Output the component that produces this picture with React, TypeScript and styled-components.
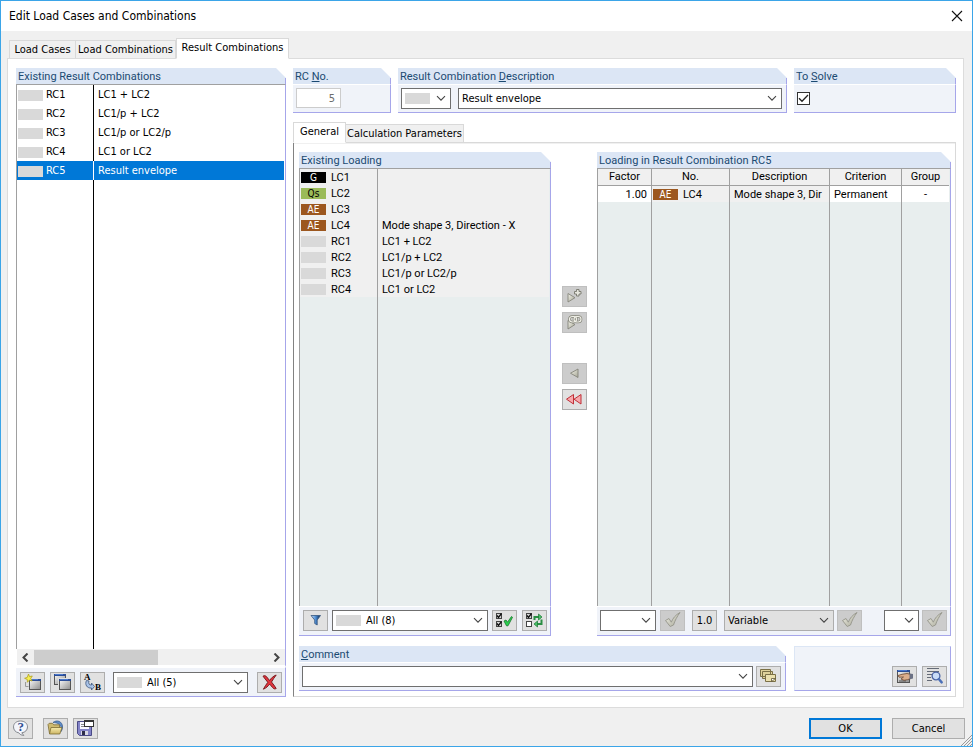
import React from "react";
import styled, { createGlobalStyle, css } from "styled-components";

const UI = `"DejaVu Sans Condensed", "DejaVu Sans", sans-serif`;
const SANS = `Roboto, "Liberation Sans", Arial, sans-serif`;
const LILAC = "#a6a6ea";
const HEAD = "#dce6f5";
const PANEL = "#f0f3f9";
const GRID = "#a0a0a0";

const Global = createGlobalStyle`
  *, *::before, *::after { box-sizing: border-box; }
  body { margin: 0; background: #f0f0f0; font-family: ${UI}; font-size: 11px; color: #000; }
  button, select, input { font: inherit; color: inherit; margin: 0; border-radius: 0; }
  svg { display: block; flex: none; }
`;

const Window = styled.div`
  min-height: 100vh;
  display: flex;
  flex-direction: column;
  border: 1px solid #3ba5e8;
  background: #f0f0f0;
`;

const TitleBar = styled.header`
  height: 30px;
  flex: none;
  display: flex;
  align-items: center;
  justify-content: space-between;
  padding: 0 7px 0 8px;
  background: #fff;
`;

const Title = styled.h1`
  margin: 0;
  font: 400 12px/16px ${UI};
`;

const CloseButton = styled.button`
  border: 0;
  padding: 0;
  background: none;
`;

const Main = styled.main`
  flex: 1;
  display: flex;
  flex-direction: column;
  padding: 7px 8px 0 6px;
`;

const TabStrip = styled.div<{ $indent?: number }>`
  display: flex;
  align-items: flex-end;
  height: 21px;
  flex: none;
  padding-left: ${(p) => p.$indent ?? 0}px;
  margin-bottom: -1px;
`;

const Tab = styled.button<{ $active?: boolean; $width: number }>`
  width: ${(p) => p.$width}px;
  height: 19px;
  padding: 1px 0 0;
  border: 1px solid #d9d9d9;
  border-left-width: 0;
  background: #f0f0f0;
  line-height: 16px;
  white-space: nowrap;
  &:first-child { border-left-width: 1px; }
  ${(p) =>
    p.$active &&
    css`
      height: 21px;
      padding: 0 0 1px;
      background: #fff;
      border-bottom-color: #fff;
      border-left-width: 1px;
      position: relative;
    `}
`;

const Page = styled.div`
  flex: 1;
  display: grid;
  grid-template-columns: 270px minmax(0, 1fr);
  column-gap: 7px;
  padding: 9px 7px 10px 8px;
  background: #fff;
  border: 1px solid #dcdcdc;
`;

const Group = styled.section`
  display: flex;
  flex-direction: column;
  min-width: 0;
`;

const GroupTitle = styled.h2`
  height: 16px;
  flex: none;
  margin: 0;
  padding-left: 2px;
  font: 400 11px/18px ${SANS};
  color: #1b4a72;
  white-space: nowrap;
  background: linear-gradient(${LILAC}, ${LILAC}) right 10px / 1px 100% no-repeat, ${HEAD};
  clip-path: polygon(0 0, calc(100% - 10px) 0, 100% 10px, 100% 100%, 0 100%);
  u { text-underline-offset: 1px; }
`;

const GroupBody = styled.div`
  display: flex;
  align-items: flex-start;
  height: 29px;
  padding: 3px 4px 0 3px;
  gap: 7px;
  background: ${PANEL};
  border-top: 1px solid #fff;
  border-right: 1px solid ${LILAC};
  border-bottom: 1px solid ${LILAC};
`;

const ListArea = styled.div<{ $fill: string }>`
  flex: 1;
  display: flex;
  border-top: 1px solid ${GRID};
  border-left: 1px solid ${GRID};
  border-right: 1px solid ${LILAC};
  padding-right: 1px;
  background: ${(p) => p.$fill};
`;

const DataTable = styled.table<{ $line: string; $row: number; $font: string }>`
  width: 100%;
  table-layout: fixed;
  border-collapse: separate;
  border-spacing: 0;
  font: 400 11px / ${(p) => p.$row - 1}px ${(p) => p.$font};
  td, th {
    padding: 0 4px;
    text-align: left;
    vertical-align: top;
    font-weight: 400;
    white-space: nowrap;
    overflow: hidden;
  }
  td { padding-top: 1px; }
  td:not(:last-child), th:not(:last-child) { border-right: 1px solid ${(p) => p.$line}; }
  th { height: 17px; text-align: center; background: #f0f0f0; border-bottom: 1px solid ${GRID}; }
  tbody tr { height: ${(p) => p.$row}px; }
`;

const Row = styled.tr<{ $bg: string; $selected?: boolean }>`
  background: ${(p) => p.$bg};
  ${(p) =>
    p.$selected &&
    css`
      color: #fff;
      && td { border-color: #fff; }
    `}
`;

const FillRow = styled.tr`
  tbody && { height: auto; }
`;

const Cell = styled.td<{ $align?: string; $bg?: string; $tight?: boolean }>`
  && {
    text-align: ${(p) => p.$align ?? "left"};
    ${(p) => p.$bg && `background: ${p.$bg};`}
    ${(p) => p.$tight && "padding-left: 1px;"}
  }
`;

const CaseName = styled.span<{ $gap: number }>`
  display: flex;
  align-items: center;
  gap: ${(p) => p.$gap}px;
`;

const Badge = styled.span<{ $bg?: string; $fg?: string }>`
  width: 25px;
  height: 11px;
  flex: none;
  background: ${(p) => p.$bg ?? "#d9d9d9"};
  color: ${(p) => p.$fg ?? "#fff"};
  font: 400 10px/11px ${UI};
  text-align: center;
`;

const Toolbar = styled.div`
  display: flex;
  align-items: flex-start;
  gap: 7px;
  height: 30px;
  flex: none;
  padding: 3px 3px 0 3px;
  background: ${PANEL};
  border-top: 1px solid #fff;
  border-right: 1px solid ${LILAC};
  border-bottom: 1px solid ${LILAC};
`;

const LoadingTools = styled(Toolbar)`
  gap: 4px;
  padding-left: 4px;
`;

const ResultTools = styled(Toolbar)`
  gap: 8px;
  padding: 4px 3px 0 4px;
`;

const Cluster = styled.div<{ $gap: number; $end?: boolean }>`
  display: flex;
  gap: ${(p) => p.$gap}px;
  ${(p) => p.$end && "margin-left: auto;"}
`;

const ToolButton = styled.button`
  width: 25px;
  height: 21px;
  flex: none;
  display: flex;
  align-items: center;
  justify-content: center;
  padding: 0;
  border: 1px solid #adadad;
  background: #e1e1e1;
  &:disabled { background: #cccccc; border-color: #bfbfbf; }
`;

const ComboFrame = styled.div<{ $width?: number; $muted?: boolean }>`
  position: relative;
  ${(p) => (p.$width ? `width: ${p.$width}px; flex: none;` : "flex: 1; min-width: 0;")}
  height: 21px;
  display: flex;
  align-items: center;
  padding-left: 3px;
  gap: 5px;
  border: 1px solid ${(p) => (p.$muted ? "#adadad" : "#6f6f6f")};
  background: ${(p) => (p.$muted ? "#e1e1e1" : "#fff")};
  > svg { position: absolute; right: 4px; top: 6px; pointer-events: none; }
`;

const ComboSelect = styled.select`
  appearance: none;
  flex: 1;
  min-width: 0;
  height: 19px;
  padding: 0;
  border: 0;
  outline: 0;
  background: none;
`;

const NumberInput = styled.input`
  width: 45px;
  height: 20px;
  border: 1px solid #cccccc;
  padding: 0 5px;
  background: #fff;
  color: #6d6d6d;
  text-align: right;
`;

const CheckFrame = styled.span`
  position: relative;
  display: block;
  width: 13px;
  height: 13px;
  margin-top: 4px;
  svg { position: absolute; left: 1px; top: 1px; pointer-events: none; opacity: 0; }
  input:checked + svg { opacity: 1; }
`;

const CheckBox = styled.input`
  appearance: none;
  display: block;
  width: 13px;
  height: 13px;
  border: 1px solid #333;
  background: #fff;
`;

const TopGroups = styled.div`
  display: grid;
  grid-template-columns: 98px minmax(0, 1fr) 162px;
  column-gap: 7px;
  margin-bottom: 9px;
`;

const InnerPage = styled.div`
  flex: 1;
  display: flex;
  flex-direction: column;
  gap: 10px;
  padding: 9px 4px 5px 5px;
  border: 1px solid #d9d9d9;
  border-left-color: #828282;
  box-shadow: inset 0 1px 0 #f0f0f0;
`;

const Panels = styled.div`
  flex: 1;
  display: grid;
  grid-template-columns: minmax(0, 252fr) 46px minmax(0, 354fr);
`;

const Transfer = styled.div`
  display: flex;
  flex-direction: column;
  align-items: center;
  gap: 30px;
  padding: 134px 0 0 1px;
`;

const ButtonStack = styled.div`
  display: grid;
  gap: 5px;
`;

const BottomRow = styled.div`
  display: grid;
  grid-template-columns: minmax(0, 1fr) 157px;
  column-gap: 8px;
`;

const CommentBody = styled(GroupBody)`
  gap: 3px;
`;

const ActionPanel = styled.div`
  display: flex;
  align-items: flex-end;
  justify-content: flex-end;
  gap: 5px;
  padding: 0 3px 3px;
  background: ${PANEL};
  border: 1px solid ${HEAD};
  border-right-color: ${LILAC};
  border-bottom-color: ${LILAC};
`;

const ScrollBar = styled.div`
  display: flex;
  align-items: center;
  height: 18px;
  flex: none;
  padding: 0 5px;
  border-left: 1px solid #fff;
  border-right: 1px solid ${LILAC};
  border-bottom: 2px solid #fff;
  background: #f0f0f0;
`;

const Track = styled.div`
  flex: 1;
  height: 15px;
  padding-left: 5px;
`;

const Thumb = styled.div`
  width: 52%;
  height: 15px;
  background: #cdcdcd;
`;

const Footer = styled.footer`
  position: relative;
  display: flex;
  align-items: flex-start;
  gap: 10px;
  height: 38px;
  flex: none;
  padding: 10px 7px 0;
`;

const DialogButton = styled.button<{ $primary?: boolean }>`
  width: 73px;
  height: 21px;
  padding: 0;
  border: ${(p) => (p.$primary ? "2px solid #0078d7" : "1px solid #adadad")};
  background: #e1e1e1;
  line-height: 16px;
`;

const Grip = styled.svg`
  position: absolute;
  right: 0;
  bottom: 0;
`;

const Chevron = () => (
  <svg width="10" height="7" viewBox="0 0 10 7" fill="none" stroke="#444" strokeWidth="1.1">
    <path d="M1 1.2l4 4 4-4" />
  </svg>
);

type ComboProps = { label: string; value?: string; width?: number; muted?: boolean; swatch?: boolean; id?: string };
const Combo = ({ label, value = "", width, muted, swatch, id }: ComboProps) => (
  <ComboFrame $width={width} $muted={muted}>
    {swatch && <Badge />}
    <ComboSelect id={id} aria-label={label}>
      <option>{value}</option>
    </ComboSelect>
    <Chevron />
  </ComboFrame>
);

const Gradients = () => (
  <svg width="0" height="0" aria-hidden>
    <defs>
      <linearGradient id="pane" x1="0" y1="0" x2="1" y2="1">
        <stop offset="0" stopColor="#fafafa" />
        <stop offset="1" stopColor="#8d8d8d" />
      </linearGradient>
      <linearGradient id="blue" x1="0" y1="0" x2="1" y2="0">
        <stop offset="0" stopColor="#cfe4fa" />
        <stop offset=".5" stopColor="#4b8bd2" />
        <stop offset="1" stopColor="#0c2344" />
      </linearGradient>
      <linearGradient id="folder" x1="0" y1="0" x2="0" y2="1">
        <stop offset="0" stopColor="#f7ecab" />
        <stop offset="1" stopColor="#cdb566" />
      </linearGradient>
      <linearGradient id="leaf" x1="0" y1="0" x2="1" y2="1">
        <stop offset="0" stopColor="#f4f4ea" />
        <stop offset="1" stopColor="#a5a595" />
      </linearGradient>
    </defs>
  </svg>
);

const Icon = ({ children }: { children: React.ReactNode }) => (
  <svg width="19" height="19" viewBox="0 0 19 19">{children}</svg>
);

const Pane = ({ x, y, w = 11, h = 10 }: { x: number; y: number; w?: number; h?: number }) => (
  <>
    <rect x={x + 0.5} y={y + 0.5} width={w - 1} height={h - 1} fill="url(#pane)" stroke="#555" />
    <rect x={x} y={y} width={w} height="2" fill="#2b4d97" />
    <rect x={x + 1} y={y} width={w - 4} height="1" fill="#4b78cc" />
  </>
);

const NewIcon = () => (
  <Icon>
    <Pane x={6} y={6} w={12} h={11} />
    <path d="M2.500 9v4.500h3" fill="none" stroke="#9a9a9a" />
    <path d="M5.500 1l1 2.600 2.800-.6-1.600 2.400 1.400 2.600-2.700-.9-2 2.200-.1-2.800-2.700-1.200 2.700-.9z" fill="#f6ee50" stroke="#b3a21c" strokeWidth=".8" />
  </Icon>
);
const CopyIcon = () => (
  <Icon>
    <Pane x={1} y={1} w={12} h={11} />
    <rect x="5" y="5" width="13" height="13" fill="#e1e1e1" />
    <Pane x={6} y={6} w={12} h={11} />
  </Icon>
);
const RenumberIcon = () => (
  <Icon>
    <text x="1" y="7" fontFamily="Liberation Serif" fontWeight="700" fontSize="9">A</text>
    <path d="M3.500 7.500c-2 4 .5 8 5 7.500v2l3-3.500-3-3.500v2c-2.300.3-3.300-1.500-2.500-4z" fill="#a9c3e8" stroke="#4a6287" strokeWidth=".9" />
    <text x="12" y="17" fontFamily="Liberation Serif" fontWeight="700" fontSize="9">B</text>
  </Icon>
);
const DeleteIcon = () => (
  <Icon>
    <path d="M3 3.200c1.500-.8 2.800-.6 3.600.6l3 3.700c1.500-2.300 3.500-4.300 6.600-5.500-1.800 2.400-3.400 4.600-4.700 7 1.500 1.900 3.200 4 4.700 6.500-1.500.8-2.700.3-3.600-.9l-2.900-3.500c-1.600 2-3.400 3.900-6.300 5.100 1.200-2.400 2.700-4.600 4.400-6.900z" fill="#e2333b" stroke="#7a1c20" strokeWidth="1" />
  </Icon>
);
const FilterIcon = () => (
  <Icon>
    <path d="M5 4.500h9.500L11.200 9v5l-2.500-1.500V9z" fill="url(#blue)" stroke="#35557f" strokeWidth=".8" />
  </Icon>
);
const MiniCheck = ({ x, y, on }: { x: number; y: number; on?: boolean }) => (
  <>
    <rect x={x + 0.5} y={y + 0.5} width="5" height="5" fill={on ? "#d4d4d4" : "#fff"} stroke="#444" />
    {on && <path d={`M${x + 1} ${y + 2.5}l1.500 2 3-4`} fill="none" stroke="#111" strokeWidth="1.300" />}
  </>
);
const CheckAllIcon = () => (
  <Icon>
    <MiniCheck x={1} y={2} on />
    <MiniCheck x={1} y={10} on />
    <path d="M9 10l2-1 1.500 2.200 4-5.700 1 .8-4.500 8.500h-1.500z" fill="#2bd04e" stroke="#16752c" strokeWidth=".8" />
  </Icon>
);
const InvertIcon = () => (
  <Icon>
    <MiniCheck x={1} y={2} on />
    <MiniCheck x={1} y={10} />
    <path d="M9.500 9V6H14M16.500 8.500V13H12" fill="none" stroke="#2a8f44" strokeWidth="2" />
    <path d="M13.500 3l3.500 3-3.500 3zM12.500 10L9 13l3.500 3z" fill="#49bf67" stroke="#1b7534" strokeWidth=".7" />
  </Icon>
);
const GreyCheck = () => (
  <Icon>
    <path d="M2.500 9.500L6 7.500l2.300 3.700C10 7 12.500 4 17 1.500c-3 4-5 8-6.500 12.500l-3.300 1.500z" fill="url(#leaf)" stroke="#94948a" strokeWidth=".9" />
  </Icon>
);
const AddIcon = () => (
  <Icon>
    <path d="M3 6.500V15l7-4.300z" fill="url(#leaf)" stroke="#85857a" strokeWidth=".9" />
    <path d="M11.500 2.500h2.500v2h2v2.500h-2v2h-2.500V7h-2V4.500h2z" fill="#e6e6de" stroke="#77776c" strokeWidth=".9" />
  </Icon>
);
const LinkIcon = () => (
  <Icon>
    <path d="M3 7.500V16l7-4.500z" fill="url(#leaf)" stroke="#85857a" strokeWidth=".9" />
    <g fill="none">
      <rect x="4.500" y="3.500" width="7" height="5.500" rx="2.700" stroke="#85857a" strokeWidth="2.600" />
      <rect x="9" y="3.500" width="7" height="5.500" rx="2.700" stroke="#85857a" strokeWidth="2.600" />
      <rect x="4.500" y="3.500" width="7" height="5.500" rx="2.700" stroke="#f0f0e8" strokeWidth="1.200" />
      <rect x="9" y="3.500" width="7" height="5.500" rx="2.700" stroke="#f0f0e8" strokeWidth="1.200" />
    </g>
  </Icon>
);
const BackIcon = () => (
  <Icon>
    <path d="M13 5v8.500L5.500 9.200z" fill="url(#leaf)" stroke="#85857a" strokeWidth=".9" />
  </Icon>
);
const BackAllIcon = () => (
  <Icon>
    <path d="M8.500 4.500v9.500L1.500 9.200zM16 4.500v9.500L9 9.200z" fill="#f7a8ac" stroke="#c03038" />
  </Icon>
);
const LibraryIcon = () => (
  <Icon>
    <g fill="#dfd29a" stroke="#7b7046">
      <path d="M1.500 2.500h10v7h-10zM3.500 4.500h10v7h-10z" />
      <path d="M6.500 7.500h10v7h-10z" fill="#ebe0ae" />
    </g>
    <path d="M12.500 14.500v-3h4z" fill="#fff" stroke="#605633" strokeWidth=".8" />
  </Icon>
);
const EditIcon = () => (
  <Icon>
    <Pane x={2} y={3} w={13} h={13} />
    <path d="M4 14h7" stroke="#555" />
    <path d="M3 8.500l4-1.200 5-.8 4 1v4l-3.500 1.200-3.500.6-3-1.300 2.500-2-4.500.2z" fill="#dcae8c" stroke="#6b4630" strokeWidth=".8" />
    <path d="M14.500 6.500l3.500.5v4.500l-3.500.8z" fill="#6b7184" />
  </Icon>
);
const FindIcon = () => (
  <Icon>
    <path d="M2 1.500h12M2 4.500h12M2 7.500h5M2 10.500h4M2 13.500h5" stroke="#646a76" />
    <circle cx="11" cy="9" r="3.900" fill="#c9dcf8" stroke="#4a63a4" strokeWidth="1.300" />
    <path d="M13.800 12l2.900 3.400" stroke="#4a6fb8" strokeWidth="2.400" strokeLinecap="round" />
  </Icon>
);
const HelpIcon = () => (
  <Icon>
    <path d="M9.500 2c4 0 7 2.400 7 5.900 0 3.200-2.400 5.600-5.700 5.900l2 2.700c-2.200-.2-4-1-5-2.700-3.300-.4-5.300-2.900-5.300-5.900C2.500 4.400 5.500 2 9.500 2z" fill="#f3f5fb" stroke="#84878d" />
    <text x="6.500" y="12" fontFamily="Liberation Serif" fontWeight="700" fontSize="13" fill="#2f4f92">?</text>
  </Icon>
);
const OpenIcon = () => (
  <Icon>
    <path d="M7 3.500c3.500-3 9.500-1.500 9.500 4.500 0 2-.5 3-1.500 4.500V8.500c0-2.500-3-5-8-5z" fill="#5f8cc7" stroke="#3c5f8f" strokeWidth=".8" />
    <path d="M2 5.500l1.200-1.200h3.300l1.200 1.500h5.800v8.700H3.500z" fill="#cfbb70" stroke="#7c6c34" strokeWidth=".8" />
    <path d="M3.500 15l1.500-6.500h11L13.800 15z" fill="url(#folder)" stroke="#7c6c34" strokeWidth=".8" />
  </Icon>
);
const SaveIcon = () => (
  <Icon>
    <path d="M1.500 2.500h14v14h-12l-2-2z" fill="#8484c8" stroke="#4a4a86" />
    <rect x="4" y="3" width="9" height="7" fill="#f8f8ff" />
    <path d="M5 5.500h5M5 7.500h6" stroke="#888" />
    <rect x="5" y="12" width="7" height="4" fill="#d9d9e4" />
    <rect x="6" y="12" width="3" height="4" fill="#2d2d4a" />
    <rect x="8.500" y="1.500" width="9" height="6" fill="#fff" stroke="#333" />
    <rect x="8" y="1" width="10" height="2" fill="#333" />
  </Icon>
);

const combos = [
  ["RC1", "LC1 + LC2"],
  ["RC2", "LC1/p + LC2"],
  ["RC3", "LC1/p or LC2/p"],
  ["RC4", "LC1 or LC2"],
];
const results = [...combos, ["RC5", "Result envelope"]];

type Loading = { name: string; text: string; tag?: string; bg?: string; fg?: string };
const loadings: Loading[] = [
  { name: "LC1", text: "", tag: "G", bg: "#000" },
  { name: "LC2", text: "", tag: "Qs", bg: "#9bbb59", fg: "#000" },
  { name: "LC3", text: "", tag: "AE", bg: "#9c571f" },
  { name: "LC4", text: "Mode shape 3, Direction - X", tag: "AE", bg: "#9c571f" },
  ...combos.map(([name, text]) => ({ name, text })),
];

const headings = ["Factor", "No.", "Description", "Criterion", "Group"];

export default function App() {
  return (
    <Window>
      <Global />
      <TitleBar>
        <Title>Edit Load Cases and Combinations</Title>
        <CloseButton aria-label="Close">
          <svg width="16" height="12" viewBox="0 0 16 12" stroke="#111" strokeWidth="1.1">
            <path d="M3 1l10 10M13 1L3 11" />
          </svg>
        </CloseButton>
      </TitleBar>
      <Main>
        <TabStrip $indent={2} role="tablist">
          <Tab role="tab" $width={67}>Load Cases</Tab>
          <Tab role="tab" $width={100}>Load Combinations</Tab>
          <Tab role="tab" aria-selected $active $width={113}>Result Combinations</Tab>
        </TabStrip>
        <Page>
          <Group>
            <GroupTitle>Existing Result Combinations</GroupTitle>
            <ListArea $fill="#fff">
              <DataTable $line="#000" $row={19} $font={UI}>
                <colgroup><col width="77" /><col /></colgroup>
                <tbody>
                  {results.map(([name, text]) => (
                    <Row key={name} $selected={name === "RC5"} $bg={name === "RC5" ? "#0078d7" : "#fff"}>
                      <Cell $tight><CaseName $gap={3}><Badge />{name}</CaseName></Cell>
                      <Cell>{text}</Cell>
                    </Row>
                  ))}
                  <FillRow><Cell /><Cell /></FillRow>
                </tbody>
              </DataTable>
            </ListArea>
            <ScrollBar>
              <svg width="7" height="9" viewBox="0 0 7 9" fill="none" stroke="#444" strokeWidth="2"><path d="M5.500.5l-4 4 4 4" /></svg>
              <Track><Thumb /></Track>
              <svg width="7" height="9" viewBox="0 0 7 9" fill="none" stroke="#444" strokeWidth="2"><path d="M1.500.5l4 4-4 4" /></svg>
            </ScrollBar>
            <ResultTools>
              <Cluster $gap={5}>
                <ToolButton aria-label="New"><NewIcon /></ToolButton>
                <ToolButton aria-label="Copy"><CopyIcon /></ToolButton>
                <ToolButton aria-label="Renumber"><RenumberIcon /></ToolButton>
              </Cluster>
              <Combo label="Filter result combinations" value="All (5)" width={135} swatch />
              <Cluster $gap={0} $end>
                <ToolButton aria-label="Delete"><DeleteIcon /></ToolButton>
              </Cluster>
            </ResultTools>
          </Group>

          <Group>
            <TopGroups>
              <Group>
                <GroupTitle><label htmlFor="rcno">RC <u>N</u>o.</label></GroupTitle>
                <GroupBody><NumberInput id="rcno" defaultValue="5" disabled /></GroupBody>
              </Group>
              <Group>
                <GroupTitle><label htmlFor="desc">Result Combination <u>D</u>escription</label></GroupTitle>
                <GroupBody>
                  <Combo label="Colour" width={50} swatch />
                  <Combo id="desc" label="Result Combination Description" value="Result envelope" />
                </GroupBody>
              </Group>
              <Group>
                <GroupTitle><label htmlFor="solve">To <u>S</u>olve</label></GroupTitle>
                <GroupBody>
                  <CheckFrame>
                    <CheckBox id="solve" type="checkbox" defaultChecked />
                    <svg width="11" height="11" viewBox="0 0 11 11" fill="none" stroke="#222" strokeWidth="1.3">
                      <path d="M1 5.200l3 3L10 2" />
                    </svg>
                  </CheckFrame>
                </GroupBody>
              </Group>
            </TopGroups>
            <TabStrip role="tablist">
              <Tab role="tab" aria-selected $active $width={53}>General</Tab>
              <Tab role="tab" $width={118}>Calculation Parameters</Tab>
            </TabStrip>
            <InnerPage>
              <Panels>
                <Group>
                  <GroupTitle>Existing Loading</GroupTitle>
                  <ListArea $fill="#e8eeee">
                    <DataTable $line={GRID} $row={16} $font={SANS}>
                      <colgroup><col width="78" /><col /></colgroup>
                      <tbody>
                        {loadings.map((l) => (
                          <Row key={l.name} $bg="#f0f0f0">
                            <Cell $tight><CaseName $gap={5}><Badge $bg={l.bg} $fg={l.fg}>{l.tag}</Badge>{l.name}</CaseName></Cell>
                            <Cell>{l.text}</Cell>
                          </Row>
                        ))}
                        <FillRow><Cell /><Cell /></FillRow>
                      </tbody>
                    </DataTable>
                  </ListArea>
                  <LoadingTools>
                    <ToolButton aria-label="Filter"><FilterIcon /></ToolButton>
                    <Combo label="Filter loading" value="All (8)" swatch />
                    <Cluster $gap={5}>
                      <ToolButton aria-label="Select all"><CheckAllIcon /></ToolButton>
                      <ToolButton aria-label="Invert selection"><InvertIcon /></ToolButton>
                    </Cluster>
                  </LoadingTools>
                </Group>

                <Transfer>
                  <ButtonStack>
                    <ToolButton disabled aria-label="Add"><AddIcon /></ToolButton>
                    <ToolButton disabled aria-label="Add linked"><LinkIcon /></ToolButton>
                  </ButtonStack>
                  <ButtonStack>
                    <ToolButton disabled aria-label="Remove"><BackIcon /></ToolButton>
                    <ToolButton aria-label="Remove all"><BackAllIcon /></ToolButton>
                  </ButtonStack>
                </Transfer>

                <Group>
                  <GroupTitle>Loading in Result Combination RC5</GroupTitle>
                  <ListArea $fill="#e8eeee">
                    <DataTable $line={GRID} $row={16} $font={SANS}>
                      <colgroup><col width="54" /><col width="78" /><col /><col width="72" /><col width="47" /></colgroup>
                      <thead><tr>{headings.map((h) => <th key={h} scope="col">{h}</th>)}</tr></thead>
                      <tbody>
                        <Row $bg="#fff">
                          <Cell $align="right">1.00</Cell>
                          <Cell $bg="#f0f0f0" $tight><CaseName $gap={5}><Badge $bg="#9c571f">AE</Badge>LC4</CaseName></Cell>
                          <Cell $bg="#f0f0f0">Mode shape 3, Dir</Cell>
                          <Cell>Permanent</Cell>
                          <Cell $align="center">-</Cell>
                        </Row>
                        <FillRow>{headings.map((h) => <Cell key={h} />)}</FillRow>
                      </tbody>
                    </DataTable>
                  </ListArea>
                  <Toolbar>
                    <Cluster $gap={4}>
                      <Combo label="Factor" width={56} />
                      <ToolButton disabled aria-label="Apply factor"><GreyCheck /></ToolButton>
                    </Cluster>
                    <ToolButton>1.0</ToolButton>
                    <Cluster $gap={3}>
                      <Combo label="Criterion" value="Variable" width={110} muted />
                      <ToolButton disabled aria-label="Apply criterion"><GreyCheck /></ToolButton>
                    </Cluster>
                    <Cluster $gap={3} $end>
                      <Combo label="Group" width={35} />
                      <ToolButton disabled aria-label="Apply group"><GreyCheck /></ToolButton>
                    </Cluster>
                  </Toolbar>
                </Group>
              </Panels>
              <BottomRow>
                <Group>
                  <GroupTitle><label htmlFor="comment"><u>C</u>omment</label></GroupTitle>
                  <CommentBody>
                    <Combo id="comment" label="Comment" />
                    <ToolButton aria-label="Comment library"><LibraryIcon /></ToolButton>
                  </CommentBody>
                </Group>
                <ActionPanel>
                  <ToolButton aria-label="Edit"><EditIcon /></ToolButton>
                  <ToolButton aria-label="Details"><FindIcon /></ToolButton>
                </ActionPanel>
              </BottomRow>
            </InnerPage>
          </Group>
        </Page>
      </Main>
      <Footer>
        <ToolButton aria-label="Help"><HelpIcon /></ToolButton>
        <Cluster $gap={5}>
          <ToolButton aria-label="Open"><OpenIcon /></ToolButton>
          <ToolButton aria-label="Save"><SaveIcon /></ToolButton>
        </Cluster>
        <Cluster $gap={10} $end>
          <DialogButton $primary>OK</DialogButton>
          <DialogButton>Cancel</DialogButton>
        </Cluster>
        <Grip width="11" height="11" viewBox="0 0 11 11" stroke="#9a9a9a" fill="none">
          <path d="M0 11L11 0M3 11l8-8M6 11l5-5M9 11l2-2" />
        </Grip>
      </Footer>
      <Gradients />
    </Window>
  );
}
